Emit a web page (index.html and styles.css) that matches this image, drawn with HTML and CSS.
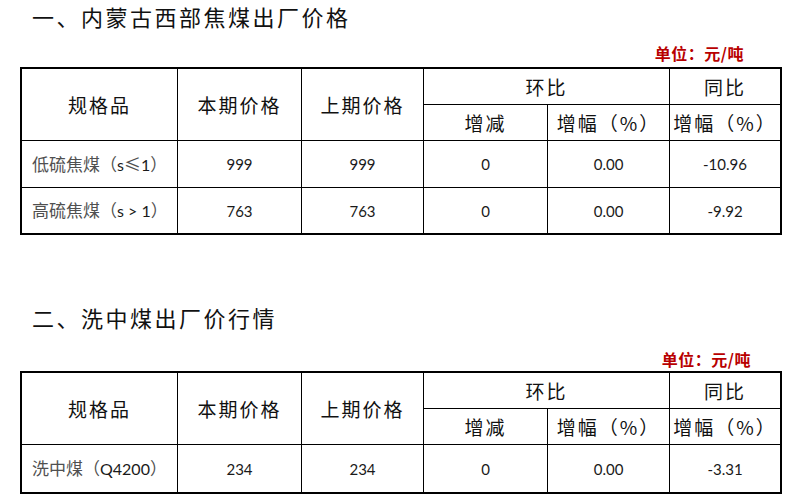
FILE: index.html
```html
<!DOCTYPE html>
<html lang="zh-CN">
<head>
<meta charset="utf-8">
<link rel="stylesheet" href="styles.css">
</head>
<body>
<h1 class="title title-a">一、内蒙古西部焦煤出厂价格</h1>
<div class="unit unit-a">单位：元/吨</div>
<table class="price t1">
  <colgroup>
    <col class="c1"><col class="c2"><col class="c3"><col class="c4"><col class="c5"><col class="c6">
  </colgroup>
  <tr class="h1">
    <th rowspan="2">规格品</th>
    <th rowspan="2">本期价格</th>
    <th rowspan="2">上期价格</th>
    <th colspan="2">环比</th>
    <th class="last">同比</th>
  </tr>
  <tr class="h2">
    <th>增减</th>
    <th>增幅（%）</th>
    <th class="last">增幅（%）</th>
  </tr>
  <tr class="d1">
    <td class="name">低硫焦煤（<span class="lat">s</span>≤<span class="lat">1</span>）</td>
    <td>999</td><td>999</td><td>0</td><td>0.00</td><td class="last">-10.96</td>
  </tr>
  <tr class="d2 end">
    <td class="name">高硫焦煤（<span class="lat">s &gt; 1</span>）</td>
    <td>763</td><td>763</td><td>0</td><td>0.00</td><td class="last">-9.92</td>
  </tr>
</table>

<h1 class="title title-b">二、洗中煤出厂价行情</h1>
<div class="unit unit-b">单位：元/吨</div>
<table class="price t2">
  <colgroup>
    <col class="c1"><col class="c2"><col class="c3"><col class="c4"><col class="c5"><col class="c6">
  </colgroup>
  <tr class="h1">
    <th rowspan="2">规格品</th>
    <th rowspan="2">本期价格</th>
    <th rowspan="2">上期价格</th>
    <th colspan="2">环比</th>
    <th class="last">同比</th>
  </tr>
  <tr class="h2">
    <th>增减</th>
    <th>增幅（%）</th>
    <th class="last">增幅（%）</th>
  </tr>
  <tr class="d3 end">
    <td class="name">洗中煤（<span class="lat">Q4200</span>）</td>
    <td>234</td><td>234</td><td>0</td><td>0.00</td><td class="last">-3.31</td>
  </tr>
</table>
</body>
</html>
```
FILE: styles.css
```css
html, body {
  margin: 0;
  padding: 0;
  background: #ffffff;
}
body {
  width: 789px;
  font-family: "Noto Sans CJK SC", "Noto Sans", sans-serif;
  color: #111;
}
.title {
  margin: 0;
  padding-left: 32px;
  height: 32px;
  font-size: 22px;
  font-weight: 400;
  letter-spacing: 2.5px;
  color: #111;
}
.title-a {
  line-height: 32px;
}
.title-b {
  margin-top: 68px;
  line-height: 29px;
}
.unit {
  height: 22px;
  line-height: 22px;
  font-size: 16px;
  font-weight: 700;
  color: #b80000;
  text-align: right;
  letter-spacing: 0.5px;
}
.unit-a {
  margin-top: 10px;
  margin-bottom: 3px;
  padding-right: 45px;
}
.unit-b {
  margin-top: 13px;
  margin-bottom: 1px;
  padding-right: 38px;
}
.price {
  margin-left: 20px;
  width: 762px;
  table-layout: fixed;
  border-collapse: separate;
  border-spacing: 0;
  border: 2px solid #000;
}
.c1 { width: 156px; }
.c2 { width: 124px; }
.c3 { width: 122px; }
.c4 { width: 124px; }
.c5 { width: 122px; }
.c6 { width: 110px; }
.price th, .price td {
  padding: 0;
  border-right: 1px solid #000;
  border-bottom: 1px solid #000;
  text-align: center;
  vertical-align: middle;
  line-height: 20px;
}
.price .last {
  border-right: none;
}
.price .end td {
  border-bottom: none;
}
.price th {
  font-size: 19px;
  font-weight: 400;
  letter-spacing: 2px;
  color: #111;
}
.price td {
  font-family: "Lato", "Noto Sans", sans-serif;
  font-size: 15px;
  color: #1a1a1a;
}
.price td.name {
  text-align: left;
  padding-left: 10px;
  font-family: "Noto Sans CJK SC", "Noto Sans", sans-serif;
  font-size: 17px;
  color: #505050;
}
.lat {
  font-family: "Lato", "Noto Sans", sans-serif;
  font-size: 16px;
  color: #1a1a1a;
}
.t1 .h1 th { height: 35px; }
.t1 .h2 th { height: 35px; }
.t1 .d1 td { height: 46px; }
.t1 .d2 td { height: 45px; }
.t2 .h1 th { height: 35px; }
.t2 .h2 th { height: 35px; }
.t2 .d3 td { height: 47px; }
```
